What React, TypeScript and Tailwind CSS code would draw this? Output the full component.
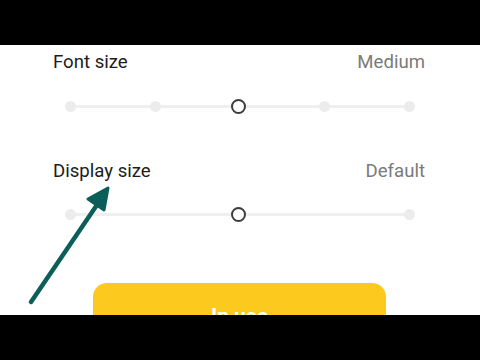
import React from "react";

function Slider({ dots }: { dots: number[] }) {
  return (
    <div className="relative h-[20px] ml-[70px] w-[339px]">
      <div className="absolute left-0 right-0 top-[9px] h-[3px] bg-[#efefef]" />
      {dots.map((d) => (
        <div
          key={d}
          className="absolute top-[5px] h-[11px] w-[11px] rounded-full bg-[#ececec]"
          style={{ left: d - 5.5 }}
        />
      ))}
      <div className="absolute left-[161px] top-[3px] h-[15px] w-[15px] rounded-full border-[2.5px] border-[#3d3d3d] bg-white" />
    </div>
  );
}

export default function App() {
  return (
    <div className="relative w-[480px] h-[360px] bg-black overflow-hidden" style={{ fontFamily: "Roboto, 'Liberation Sans', sans-serif" }}>
      <div className="h-[45px] bg-black" />
      <div className="h-[270px] bg-white overflow-hidden pt-[6px]">
        <div className="flex items-center justify-between h-[24px] pl-[53px] pr-[55px]">
          <span className="text-[18.6px] text-[#1c1c1c]">Font size</span>
          <span className="text-[18.6px] text-[#7a7a7a]">Medium</span>
        </div>
        <div className="mt-[21px]">
          <Slider dots={[0, 85, 254, 339]} />
        </div>
        <div className="mt-[44px] flex items-center justify-between h-[24px] pl-[53px] pr-[55px]">
          <span className="text-[18.6px] text-[#1c1c1c]">Display size</span>
          <span className="text-[18.6px] text-[#7a7a7a]">Default</span>
        </div>
        <div className="mt-[20px]">
          <Slider dots={[0, 339]} />
        </div>
        <div className="mt-[59px] ml-[93px] w-[293px] h-[68px] rounded-[14px] bg-[#fcca1f] flex items-center justify-center">
          <span className="text-[21px] font-bold text-white">In use</span>
        </div>
      </div>
      <div className="h-[45px] bg-black" />
      <svg className="absolute left-0 top-0" width="480" height="360" viewBox="0 0 480 360">
        <line x1="31" y1="302" x2="103" y2="196" stroke="#0c5e58" strokeWidth="4.5" strokeLinecap="round" />
        <path d="M108 188 L88 199 L104 210 Z" fill="#0c5e58" stroke="#0c5e58" strokeWidth="3" strokeLinejoin="round" />
      </svg>
    </div>
  );
}
